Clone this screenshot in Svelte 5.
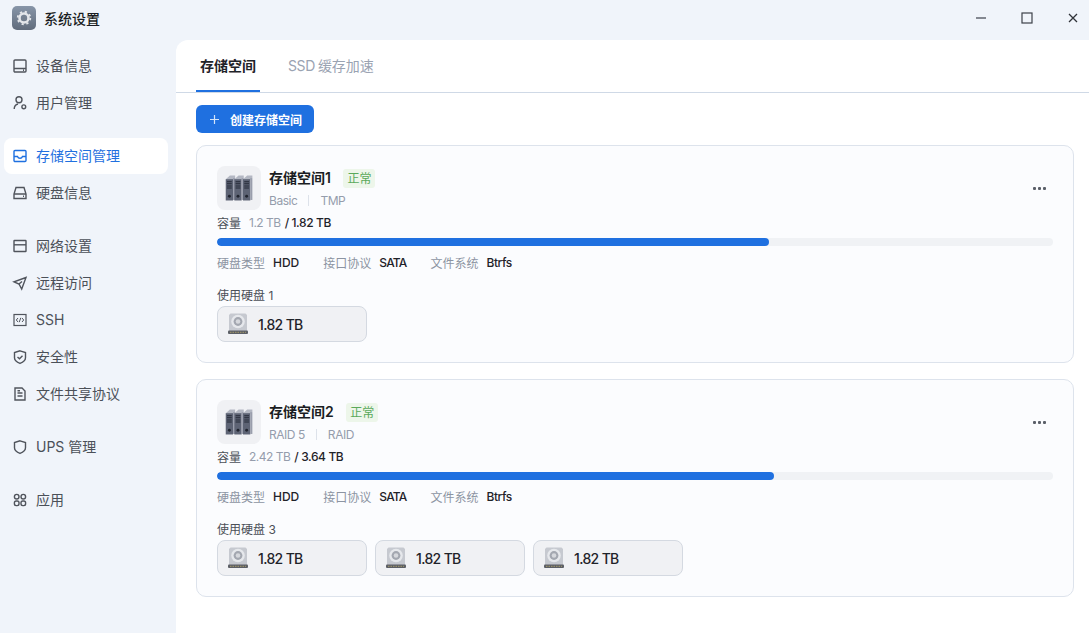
<script>
  const groups = [
    [
      { label: '设备信息', icon: 'device' },
      { label: '用户管理', icon: 'user' }
    ],
    [
      { label: '存储空间管理', icon: 'storage', active: true },
      { label: '硬盘信息', icon: 'disk' }
    ],
    [
      { label: '网络设置', icon: 'network' },
      { label: '远程访问', icon: 'remote' },
      { label: 'SSH', icon: 'ssh' },
      { label: '安全性', icon: 'shield' },
      { label: '文件共享协议', icon: 'file' }
    ],
    [{ label: 'UPS 管理', icon: 'ups' }],
    [{ label: '应用', icon: 'apps' }]
  ];

  const pools = [
    { name: '存储空间1', level: 'Basic', fs: 'TMP', used: '1.2 TB', total: '1.82 TB', pct: 66, disks: 1 },
    { name: '存储空间2', level: 'RAID 5', fs: 'RAID', used: '2.42 TB', total: '3.64 TB', pct: 66.6, disks: 3 }
  ];
</script>

{#snippet navIcon(name)}
  <svg class="nav-icon" viewBox="0 0 16 16" fill="none" stroke="currentColor" stroke-width="1.4">
    {#if name === 'device'}
      <rect x="2" y="2" width="12" height="12" rx="1" /><path d="M2 10.500h12M11 12.300h1" />
    {:else if name === 'user'}
      <circle cx="7" cy="4.800" r="3" /><path d="M2.200 14c0-2.600 1.600-4.400 3.800-5" /><circle cx="11.800" cy="11.800" r="1.900" />
    {:else if name === 'storage'}
      <rect x="2" y="2.500" width="12" height="11" rx="1" /><path d="M2 8.500h3.500c.4 1.200 1.300 1.800 2.500 1.800s2.100-.6 2.500-1.800H14" />
    {:else if name === 'disk'}
      <path d="M4 2.500h8l2 6.500v4.500H2V9z" /><path d="M2 9h12M11 11.300h1" />
    {:else if name === 'network'}
      <rect x="2" y="2.500" width="12" height="11" rx=".5" /><path d="M2 6.800h12" />
    {:else if name === 'remote'}
      <path d="M14 2.500 2 6.800l5 2.200 2.700 5z" /><path d="M7 9l3-2.500" />
    {:else if name === 'ssh'}
      <rect x="2" y="2.500" width="12" height="11" stroke-width="1.200" /><path d="M6 6 4.300 8 6 10M10 6l1.700 2L10 10M8.800 5.800l-1.600 4.400" stroke-width="1" />
    {:else if name === 'shield'}
      <path d="M8 1.800 13.500 3.500v5.200c0 2.500-2.500 4.500-5.500 5.700-3-1.200-5.500-3.200-5.500-5.700V3.500z" /><path d="M5.500 8l2 1.800 3-3" />
    {:else if name === 'file'}
      <path d="M3 2h7l3 3v9H3z" /><path d="M5.500 7h5M5.500 10h5M5.500 4.800h2.500" />
    {:else if name === 'ups'}
      <path d="M8 1.800 13.500 3.500v5.200c0 2.500-2.500 4.500-5.500 5.700-3-1.200-5.500-3.200-5.500-5.700V3.500z" />
    {:else if name === 'apps'}
      <circle cx="4.700" cy="4.700" r="2.300" /><circle cx="11.300" cy="4.700" r="2.300" /><rect x="2.400" y="9" width="4.600" height="4.600" rx="1.800" /><rect x="9" y="9" width="4.600" height="4.600" rx="1.800" />
    {/if}
  </svg>
{/snippet}

{#snippet nasIcon()}
  <svg class="nas" viewBox="0.5 1 26.5 25">
    {#each [0, 8.300, 16.600] as x}
      <g transform="translate({x} 0)">
        <path d="M1 5 5 1.500h5V4L8 5.500z" fill="#b4b8c3" />
        <rect x="1" y="5" width="7" height="20.500" fill="#5d6374" />
        <rect x="8" y="4" width="2" height="21" fill="#9a9eac" />
        <path d="M2.200 7.500h4.600M2.200 9.500h4.600M2.200 11.500h4.600M2.200 13.500h4.600" stroke="#252a36" stroke-width="1" />
        <circle cx="4.500" cy="21.500" r="1.400" fill="#20242f" />
      </g>
    {/each}
  </svg>
{/snippet}

{#snippet hddIcon()}
  <svg class="hdd" viewBox="0 0 22 22">
    <path d="M3.500 .5h15l1.500 1.500v16H2V2z" fill="#c6c9d0" />
    <circle cx="11" cy="8.500" r="6.800" fill="#e6e8ec" />
    <circle cx="11" cy="8.500" r="4.400" fill="#a3a7b0" />
    <circle cx="11" cy="8.500" r="2.300" fill="#d6d8dd" />
    <rect x="1" y="17.500" width="20" height="3.500" rx="1" fill="#5c5f66" />
    <path d="M3 19.300h16" stroke="#a59a6a" stroke-width="1" stroke-dasharray="1.500 1" />
  </svg>
{/snippet}

<div class="window">
  <header class="titlebar">
    <div class="app-title">
      <svg class="app-logo" viewBox="0 0 24 24">
        <defs>
          <linearGradient id="logoBg" x1="0" y1="0" x2="0" y2="1">
            <stop offset="0" stop-color="#8795a8" />
            <stop offset="1" stop-color="#616c7c" />
          </linearGradient>
        </defs>
        <rect width="24" height="24" rx="5" fill="url(#logoBg)" />
        <circle cx="12" cy="12" r="4.500" fill="none" stroke="#e4e6ea" stroke-width="2.600" />
        <circle cx="12" cy="12" r="6.300" fill="none" stroke="#e4e6ea" stroke-width="1.800" stroke-dasharray="2.200 2.750" />
        <path d="M12 9.800 14 13.700h-4z" fill="none" stroke="#76818f" stroke-width="1.100" />
      </svg>
      <span>系统设置</span>
    </div>
    <div class="win-controls">
      <svg viewBox="0 0 12 12"><path d="M1 6h10" stroke="#555a63" stroke-width="1.400" /></svg>
      <svg viewBox="0 0 12 12"><rect x="1" y="1" width="10" height="10" fill="none" stroke="#3c4048" stroke-width="1.200" /></svg>
      <svg viewBox="0 0 12 12"><path d="M2 2l8 8M10 2l-8 8" stroke="#30333a" stroke-width="1.300" /></svg>
    </div>
  </header>

  <div class="body">
    <nav class="sidebar">
      {#each groups as group}
        <div class="nav-group">
          {#each group as item}
            <div class="nav-item" class:active={item.active}>
              {@render navIcon(item.icon)}
              <span>{item.label}</span>
            </div>
          {/each}
        </div>
      {/each}
    </nav>

    <main class="main">
      <div class="tabs">
        <div class="tab current">存储空间</div>
        <div class="tab"><span class="latin">SSD</span>缓存加速</div>
      </div>

      <div class="content">
        <button class="create-btn">
          <svg class="plus" viewBox="0 0 9 9"><path d="M4.500 0v9M0 4.500h9" stroke="#d5e4f9" stroke-width="1.200" /></svg>
          创建存储空间
        </button>

        {#each pools as pool}
          <section class="card">
            <div class="card-head">
              <div class="nas-box">{@render nasIcon()}</div>
              <div class="head-text">
                <div class="name-row">
                  <span class="name">{pool.name}</span>
                  <span class="badge">正常</span>
                </div>
                <div class="sub-row">
                  <span>{pool.level}</span><i></i><span>{pool.fs}</span>
                </div>
              </div>
              <div class="more"><b></b><b></b><b></b></div>
            </div>

            <div class="capacity">
              <span class="cap-label">容量</span>
              <span class="cap-used">{pool.used}</span>
              <span class="cap-total">/ {pool.total}</span>
            </div>
            <div class="bar"><div class="fill" style="width: {pool.pct}%"></div></div>

            <div class="meta">
              <span class="k">硬盘类型</span><span class="v">HDD</span>
              <span class="k">接口协议</span><span class="v">SATA</span>
              <span class="k">文件系统</span><span class="v">Btrfs</span>
            </div>

            <div class="disk-label">使用硬盘 {pool.disks}</div>
            <div class="disks">
              {#each Array(pool.disks) as _}
                <div class="disk">{@render hddIcon()}<span>1.82 TB</span></div>
              {/each}
            </div>
          </section>
        {/each}
      </div>
    </main>
  </div>
</div>

<style>
  :global(body) {
    margin: 0;
    overflow: hidden;
  }

  .window {
    width: 1089px;
    height: 633px;
    display: flex;
    flex-direction: column;
    background: #f0f4fa;
    font-family: Inter, "Noto Sans CJK SC", sans-serif;
    color: #1f2329;
  }

  .titlebar {
    height: 40px;
    flex: none;
    box-sizing: border-box;
    padding-bottom: 4px;
    display: flex;
    align-items: center;
    justify-content: space-between;
  }

  .app-title {
    display: flex;
    align-items: center;
    gap: 8px;
    padding-left: 12px;
    font-size: 14px;
    font-weight: 500;
    color: #1a1d22;
  }

  .app-title span {
    margin-bottom: 1px;
  }

  .app-logo {
    width: 24px;
    height: 24px;
  }

  .win-controls {
    display: flex;
    gap: 34px;
    padding-right: 10px;
  }

  .win-controls svg {
    width: 12px;
    height: 12px;
    display: block;
  }

  .body {
    flex: 1;
    display: flex;
    min-height: 0;
  }

  .sidebar {
    width: 176px;
    flex: none;
    padding: 8px 8px 0 4px;
    box-sizing: border-box;
    display: flex;
    flex-direction: column;
    gap: 17px;
  }

  .nav-group {
    display: flex;
    flex-direction: column;
    gap: 1px;
  }

  .nav-item {
    height: 36px;
    display: flex;
    align-items: center;
    gap: 8px;
    padding-left: 8px;
    border-radius: 8px;
    font-size: 14px;
    color: #4b5058;
  }

  .nav-item span {
    margin-bottom: 2px;
  }

  .nav-item.active {
    background: #fff;
    color: #1f70e0;
  }

  .nav-icon {
    width: 16px;
    height: 16px;
    flex: none;
    color: #50545c;
  }

  .active .nav-icon {
    color: #1f70e0;
  }

  .main {
    flex: 1;
    background: #fff;
    border-top-left-radius: 12px;
    min-width: 0;
  }

  .tabs {
    height: 53px;
    box-sizing: border-box;
    display: flex;
    gap: 24px;
    padding-left: 20px;
    border-bottom: 1px solid #cfd9e6;
  }

  .tab {
    height: 52px;
    box-sizing: border-box;
    padding: 0 4px 2px;
    display: flex;
    align-items: center;
    font-size: 14px;
    color: #9aa3b2;
  }

  .latin {
    letter-spacing: -0.4px;
    margin-right: 3px;
  }

  .tab.current {
    color: #1f2329;
    font-weight: 600;
    padding-bottom: 0;
    border-bottom: 2px solid #1f70e0;
  }

  .content {
    padding: 12px 15px 0 20px;
    display: flex;
    flex-direction: column;
    align-items: flex-start;
    gap: 16px;
  }

  .create-btn {
    height: 28px;
    width: 118px;
    margin-bottom: -4px;
    padding: 0 0 0 14px;
    border: none;
    border-radius: 6px;
    background: #1f70e0;
    color: #fff;
    font-family: inherit;
    font-size: 12px;
    font-weight: 600;
    display: flex;
    align-items: center;
    gap: 11px;
  }

  .plus {
    width: 9px;
    height: 9px;
  }

  .card {
    width: 100%;
    height: 218px;
    box-sizing: border-box;
    padding: 20px;
    border: 1px solid #dde3ec;
    border-radius: 10px;
    background: #fbfcfe;
  }

  .card-head {
    display: flex;
    gap: 8px;
    height: 44px;
  }

  .nas-box {
    width: 44px;
    height: 44px;
    border-radius: 8px;
    background: #f0f1f4;
    display: flex;
    align-items: center;
    justify-content: center;
  }

  .nas {
    width: 28px;
    height: 26px;
  }

  .head-text {
    flex: 1;
    display: flex;
    flex-direction: column;
  }

  .name-row {
    display: flex;
    align-items: center;
    gap: 12.5px;
    height: 24px;
  }

  .name {
    margin-bottom: 2px;
    font-size: 14px;
    font-weight: 600;
    color: #1a1d22;
  }

  .badge {
    padding: 0 4px;
    height: 19px;
    line-height: 19px;
    border-radius: 3px;
    background: #edf6ea;
    color: #5aa95a;
    font-size: 12px;
  }

  .sub-row {
    margin-top: 3px;
    display: flex;
    align-items: center;
    font-size: 12px;
    letter-spacing: -0.45px;
    color: #959dac;
  }

  .sub-row i {
    width: 1px;
    height: 11px;
    background: #dde2ea;
    margin: 0 11px;
  }

  .more {
    display: flex;
    gap: 2px;
    align-self: flex-start;
    margin: 21px 7px 0 0;
  }

  .more b {
    width: 3px;
    height: 3px;
    border-radius: 1px;
    background: #5a5f68;
  }

  .capacity {
    height: 16px;
    margin-top: 4px;
    display: flex;
    align-items: center;
    gap: 7px;
    font-size: 12px;
  }

  .cap-label {
    color: #4b5058;
  }

  .cap-used {
    color: #959dac;
    margin-left: 1px;
    margin-right: -3px;
    letter-spacing: -0.5px;
  }

  .cap-total {
    font-weight: 500;
    color: #1f2329;
    letter-spacing: -0.4px;
  }

  .bar {
    margin-top: 8px;
    height: 8px;
    border-radius: 4px;
    background: #f0f2f5;
    overflow: hidden;
  }

  .fill {
    height: 100%;
    border-radius: 4px;
    background: #1f70e0;
  }

  .meta {
    margin-top: 8px;
    height: 16px;
    display: flex;
    align-items: center;
    font-size: 12px;
  }

  .k {
    color: #8c94a2;
    margin-right: 8px;
  }

  .v {
    color: #1f2329;
    font-weight: 500;
    margin-right: 24px;
    letter-spacing: -0.5px;
  }

  .v:nth-child(2) {
    letter-spacing: 0;
  }

  .v:nth-child(4) {
    letter-spacing: -0.8px;
  }

  .disk-label {
    margin-top: 18px;
    height: 16px;
    line-height: 16px;
    font-size: 12px;
    color: #4b5058;
  }

  .disks {
    margin-top: 2px;
    display: flex;
    gap: 8px;
  }

  .disk {
    width: 150px;
    height: 36px;
    box-sizing: border-box;
    padding-left: 9px;
    display: flex;
    align-items: center;
    gap: 9px;
    border: 1px solid #d4d9e1;
    border-radius: 8px;
    background: #f0f1f4;
    font-size: 14px;
    font-weight: 500;
    letter-spacing: -0.65px;
    color: #1f2329;
  }

  .hdd {
    width: 22px;
    height: 22px;
  }
</style>
